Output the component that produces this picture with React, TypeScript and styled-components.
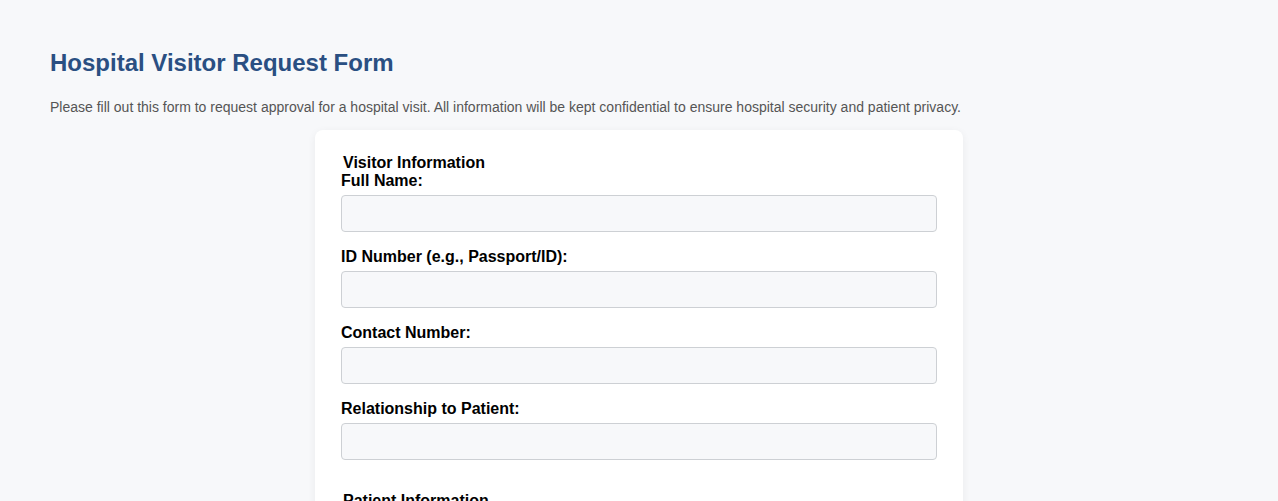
import { FC } from "react";
import styled, { createGlobalStyle } from "styled-components";

const GlobalStyle = createGlobalStyle`
  body {
    margin: 0;
    background: #f7f8fa;
    font-family: "Liberation Sans", Arial, sans-serif;
  }
`;

interface IField {
  id: string;
  label: string;
}

const visitorFields: IField[] = [
  { id: "fullName", label: "Full Name:" },
  { id: "idNumber", label: "ID Number (e.g., Passport/ID):" },
  { id: "contact", label: "Contact Number:" },
  { id: "relationship", label: "Relationship to Patient:" },
];

const patientFields: IField[] = [
  { id: "patientName", label: "Patient Name:" },
  { id: "ward", label: "Ward / Room Number:" },
];

const FieldGroup: FC<{ title: string; fields: IField[] }> = ({ title, fields }) => (
  <Section>
    <Legend>{title}</Legend>
    {fields.map((f) => (
      <Row key={f.id}>
        <Label htmlFor={f.id}>{f.label}</Label>
        <Input id={f.id} type="text" />
      </Row>
    ))}
  </Section>
);

const App: FC = () => {
  return (
    <Page>
      <GlobalStyle />
      <Title>Hospital Visitor Request Form</Title>
      <Intro>
        Please fill out this form to request approval for a hospital visit. All information will be
        kept confidential to ensure hospital security and patient privacy.
      </Intro>
      <Card>
        <FieldGroup title="Visitor Information" fields={visitorFields} />
        <FieldGroup title="Patient Information" fields={patientFields} />
      </Card>
    </Page>
  );
};

const Page = styled.div`
  padding: 49px 50px 40px;
`;

const Title = styled.h1`
  margin: 0 0 22px;
  color: #2a4f82;
  font-size: 24px;
  font-weight: bold;
  line-height: 28px;
`;

const Intro = styled.p`
  margin: 0 0 15px;
  color: #555;
  font-size: 14px;
  line-height: 16px;
`;

const Card = styled.form`
  max-width: 648px;
  box-sizing: border-box;
  margin: 0 auto;
  padding: 24px 26px;
  background: #fff;
  border-radius: 8px;
  box-shadow: 0 2px 8px rgba(0, 0, 0, 0.06);
`;

const Section = styled.fieldset`
  border: none;
  margin: 0 0 32px;
  padding: 0;
  min-width: 0;
`;

const Legend = styled.legend`
  padding: 0 2px;
  color: #000;
  font-size: 16px;
  font-weight: bold;
  line-height: 18px;
`;

const Row = styled.div`
  display: flex;
  flex-direction: column;
  margin-bottom: 16px;

  &:last-child {
    margin-bottom: 0;
  }
`;

const Label = styled.label`
  display: block;
  margin-bottom: 5px;
  color: #000;
  font-size: 16px;
  font-weight: bold;
  line-height: 18px;
`;

const Input = styled.input`
  box-sizing: border-box;
  width: 100%;
  height: 37px;
  padding: 8px 10px;
  border: 1px solid #cdd0d4;
  border-radius: 4px;
  background: #f7f8fa;
  font-family: "Liberation Sans", Arial, sans-serif;
  font-size: 14px;
`;

export default App;
